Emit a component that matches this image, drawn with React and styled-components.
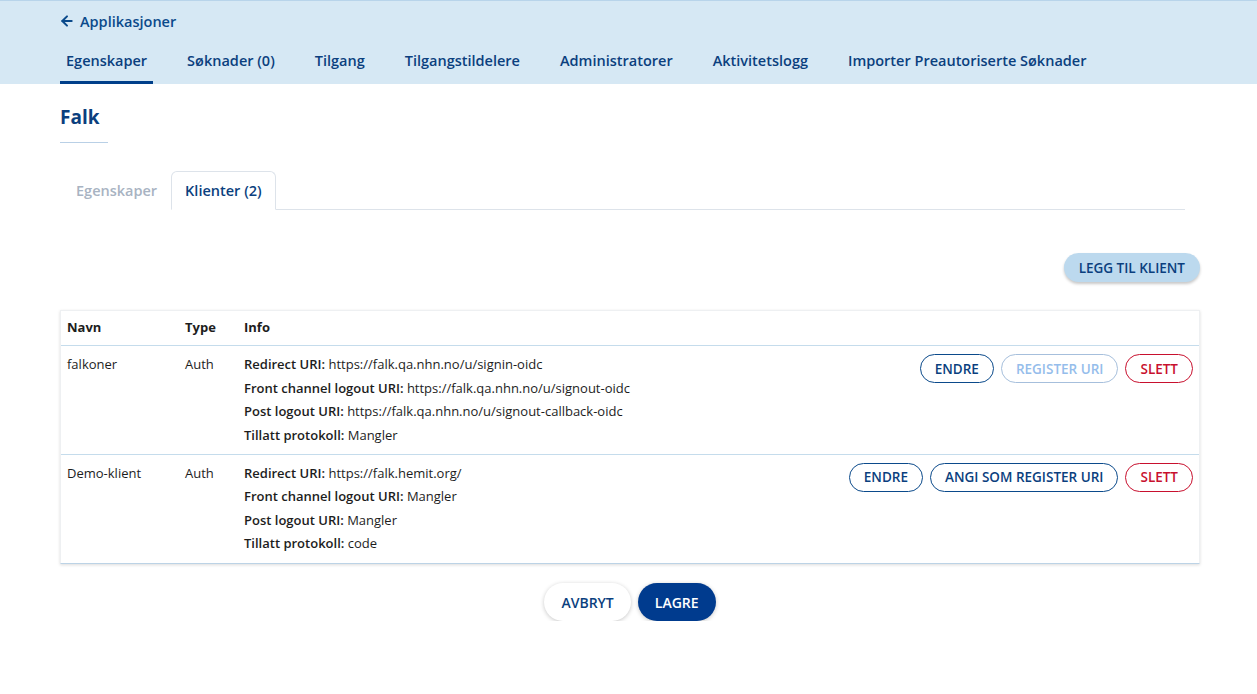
import React, { useState } from 'react';
import styled, { createGlobalStyle } from 'styled-components';
import { ArrowLeft } from 'lucide-react';

const GlobalStyle = createGlobalStyle`
  body {
    margin: 0;
    background: #ffffff;
    font-family: "Open Sans", "Noto Sans", sans-serif;
    color: #1d1d1d;
  }
  * { box-sizing: border-box; }
`;

const TopBar = styled.header`
  background: #d6e8f4;
  border-top: 1px solid #b8d4ea;
  height: 84px;
  padding: 0 60px;
  display: flex;
  flex-direction: column;
`;

const BackLink = styled.a`
  display: flex;
  align-items: center;
  gap: 5px;
  margin-top: 10px;
  margin-left: -1px;
  height: 20px;
  color: #0b4a8b;
  font-size: 14.5px;
  font-weight: 600;
  text-decoration: none;
  cursor: pointer;
`;

const NavTabs = styled.nav`
  display: flex;
  gap: 28px;
  margin-top: auto;
`;

const NavTab = styled.a`
  padding: 0 6px 11px;
  border-bottom: 3px solid ${p => (p.$active ? '#003f8a' : 'transparent')};
  color: #0b3f7e;
  font-size: 14.5px;
  font-weight: 600;
  white-space: nowrap;
  cursor: pointer;
`;

const Main = styled.main`
  padding: 0 57px 0 60px;
`;

const Title = styled.h1`
  display: inline-block;
  margin: 21px 0 0;
  padding-bottom: 12px;
  border-bottom: 1px solid #b9d0e6;
  min-width: 48px;
  color: #0b3f7e;
  font-size: 19px;
  font-weight: 700;
  line-height: 25px;
`;

const SubTabs = styled.div`
  display: flex;
  margin: 28px 15px 0 0;
  border-bottom: 1px solid #dde3ea;
`;

const SubTab = styled.button`
  font-family: inherit;
  font-size: 14.5px;
  font-weight: 600;
  height: 39px;
  padding: 0 13px 0 ${p => (p.$active ? '13px' : '15px')};
  margin-bottom: -1px;
  background: #fff;
  border: 1px solid ${p => (p.$active ? '#dde3ea' : 'transparent')};
  border-bottom-color: ${p => (p.$active ? '#fff' : 'transparent')};
  border-radius: 6px 6px 0 0;
  color: ${p => (p.$active ? '#0b3f7e' : '#a8b3c2')};
  cursor: pointer;
`;

const Toolbar = styled.div`
  display: flex;
  justify-content: flex-end;
  margin-top: 43px;
`;

const PillButton = styled.button`
  font-family: inherit;
  font-size: ${p => (p.$size === 'lg' ? '14px' : '13.5px')};
  font-weight: 600;
  text-transform: uppercase;
  height: ${p => (p.$size === 'lg' ? '38px' : '29px')};
  padding: 0 ${p => (p.$size === 'lg' ? '16px' : '14px')};
  border-radius: 999px;
  white-space: nowrap;
  cursor: pointer;
  background: #fff;
  border: 1px solid transparent;

  ${p => p.$variant === 'soft' && `
    background: #bcd9ee;
    color: #0b3f7e;
    box-shadow: 0 2px 3px rgba(0, 0, 0, 0.22);
  `}
  ${p => p.$variant === 'outline' && `
    border-color: #0b4a8b;
    color: #0b3f7e;
  `}
  ${p => p.$variant === 'disabled' && `
    border-color: #a6bfdc;
    color: #95bdeb;
    cursor: default;
  `}
  ${p => p.$variant === 'danger' && `
    border-color: #c8102e;
    color: #c8102e;
  `}
  ${p => p.$variant === 'white' && `
    color: #0b3f7e;
    box-shadow: 0 1px 4px rgba(0, 0, 0, 0.22);
  `}
  ${p => p.$variant === 'primary' && `
    background: #003b8e;
    color: #fff;
    box-shadow: 0 1px 4px rgba(0, 0, 0, 0.22);
  `}
`;

const Card = styled.div`
  margin-top: 28px;
  background: #fff;
  border: 1px solid #eef0f2;
  border-bottom: 1px solid #bcd3e6;
  box-shadow: 0 1px 3px rgba(0, 0, 0, 0.14);
`;

const Grid = styled.div`
  display: grid;
  grid-template-columns: 124px 59px 1fr auto;
`;

const HeadCell = styled.div`
  padding: 8px 0 9px ${p => (p.$first ? '6px' : '0')};
  font-size: 13px;
  line-height: 17px;
  font-weight: 700;
  color: #1d1d1d;
  border-bottom: 1px solid #c5dcec;
`;

const Row = styled.div`
  display: contents;
`;

const Cell = styled.div`
  padding: 9px 0 ${p => (p.$last ? '10px' : '9px')} ${p => (p.$first ? '6px' : '0')};
  font-size: 13px;
  color: #1d1d1d;
  line-height: 19px;
  border-bottom: ${p => (p.$last ? 'none' : '1px solid #c5dcec')};
`;

const InfoList = styled.div`
  display: flex;
  flex-direction: column;
  gap: 4.5px;
`;

const InfoLine = styled.div`
  font-size: 13px;
  line-height: 19px;
  white-space: nowrap;

  b {
    font-weight: 600;
  }
`;

const Actions = styled.div`
  display: flex;
  justify-content: flex-end;
  gap: 7px;
  padding: 8px 6px 0 0;
  border-bottom: ${p => (p.$last ? 'none' : '1px solid #c5dcec')};
`;

const Footer = styled.div`
  display: flex;
  justify-content: center;
  gap: 7px;
  margin-top: 19px;
`;

const clients = [
  {
    name: 'falkoner',
    type: 'Auth',
    redirect: 'https://falk.qa.nhn.no/u/signin-oidc',
    frontLogout: 'https://falk.qa.nhn.no/u/signout-oidc',
    postLogout: 'https://falk.qa.nhn.no/u/signout-callback-oidc',
    protocol: 'Mangler',
    isRegister: true,
  },
  {
    name: 'Demo-klient',
    type: 'Auth',
    redirect: 'https://falk.hemit.org/',
    frontLogout: 'Mangler',
    postLogout: 'Mangler',
    protocol: 'code',
    isRegister: false,
  },
];

const navItems = [
  'Egenskaper',
  'Søknader (0)',
  'Tilgang',
  'Tilgangstildelere',
  'Administratorer',
  'Aktivitetslogg',
  'Importer Preautoriserte Søknader',
];

export default function App() {
  const [tab, setTab] = useState('klienter');

  return (
    <>
      <GlobalStyle />
      <TopBar>
        <BackLink>
          <ArrowLeft size={16} strokeWidth={3} />
          Applikasjoner
        </BackLink>
        <NavTabs>
          {navItems.map((item, i) => (
            <NavTab key={item} $active={i === 0}>{item}</NavTab>
          ))}
        </NavTabs>
      </TopBar>

      <Main>
        <Title>Falk</Title>

        <SubTabs>
          <SubTab $active={tab === 'egenskaper'} onClick={() => setTab('egenskaper')}>
            Egenskaper
          </SubTab>
          <SubTab $active={tab === 'klienter'} onClick={() => setTab('klienter')}>
            Klienter (2)
          </SubTab>
        </SubTabs>

        <Toolbar>
          <PillButton $variant="soft">Legg til klient</PillButton>
        </Toolbar>

        <Card>
          <Grid>
            <HeadCell $first>Navn</HeadCell>
            <HeadCell>Type</HeadCell>
            <HeadCell>Info</HeadCell>
            <HeadCell />
            {clients.map((c, i) => {
              const last = i === clients.length - 1;
              return (
                <Row key={c.name}>
                  <Cell $first $last={last}>{c.name}</Cell>
                  <Cell $last={last}>{c.type}</Cell>
                  <Cell $last={last}>
                    <InfoList>
                      <InfoLine><b>Redirect URI:</b> {c.redirect}</InfoLine>
                      <InfoLine><b>Front channel logout URI:</b> {c.frontLogout}</InfoLine>
                      <InfoLine><b>Post logout URI:</b> {c.postLogout}</InfoLine>
                      <InfoLine><b>Tillatt protokoll:</b> {c.protocol}</InfoLine>
                    </InfoList>
                  </Cell>
                  <Actions $last={last}>
                    <PillButton $variant="outline">Endre</PillButton>
                    {c.isRegister ? (
                      <PillButton $variant="disabled" disabled>Register URI</PillButton>
                    ) : (
                      <PillButton $variant="outline">Angi som register URI</PillButton>
                    )}
                    <PillButton $variant="danger">Slett</PillButton>
                  </Actions>
                </Row>
              );
            })}
          </Grid>
        </Card>

        <Footer>
          <PillButton $variant="white" $size="lg">Avbryt</PillButton>
          <PillButton $variant="primary" $size="lg">Lagre</PillButton>
        </Footer>
      </Main>
    </>
  );
}
